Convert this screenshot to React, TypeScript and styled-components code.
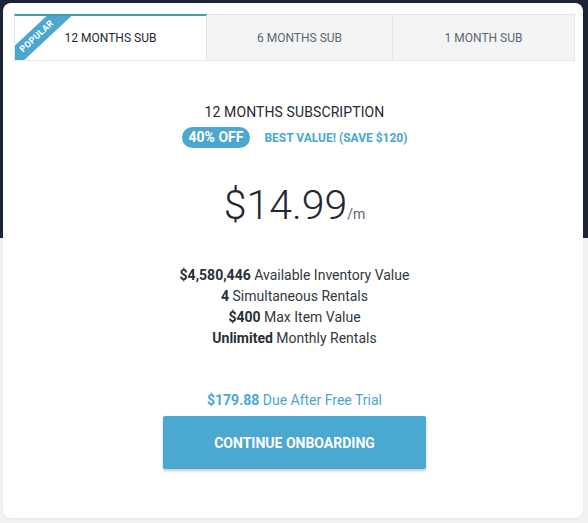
import * as React from 'react';
import styled, { createGlobalStyle } from 'styled-components';

const GlobalStyle = createGlobalStyle`
  html, body {
    margin: 0;
    padding: 0;
  }
  body {
    font-family: Roboto, 'Liberation Sans', Arial, sans-serif;
  }
`;

const Page = styled.div`
  width: 588px;
  height: 523px;
  box-sizing: border-box;
  padding: 3px 5px 5px 3px;
  background: linear-gradient(to bottom, #1b2537 0, #1b2537 238px, #f2f2f2 238px);
`;

const Card = styled.div`
  height: 515px;
  box-sizing: border-box;
  padding: 11px 8px 0 11px;
  background: #fff;
  border-radius: 8px;
  box-shadow: 0 1px 3px rgba(0, 0, 0, 0.06);
  display: flex;
  flex-direction: column;
  align-items: center;
`;

const Tabs = styled.div`
  align-self: stretch;
  display: grid;
  grid-template-columns: 193px 186px 1fr;
  height: 47px;
`;

const Tab = styled.div<{ $active?: boolean }>`
  position: relative;
  overflow: hidden;
  display: flex;
  align-items: center;
  justify-content: center;
  box-sizing: border-box;
  font-size: 12px;
  color: ${(p) => (p.$active ? '#1f2733' : '#5f6670')};
  background: ${(p) => (p.$active ? '#fff' : '#f3f4f6')};
  border: 1px solid #e4e5e8;
  border-top: ${(p) => (p.$active ? '2px solid #4a9fa0' : '1px solid #e4e5e8')};
  cursor: pointer;
  & + & {
    border-left: none;
  }
`;

// corner ribbon, centred on the tab's top-left diagonal
const Ribbon = styled.div`
  position: absolute;
  top: 12px;
  left: -26px;
  width: 96px;
  height: 17px;
  transform: rotate(-43deg);
  background: #4aa7cf;
  color: #fff;
  font-size: 9px;
  font-weight: 700;
  line-height: 17px;
  text-align: center;
  letter-spacing: 0.3px;
`;

const Title = styled.div`
  margin-top: 43px;
  font-size: 14px;
  color: #252a33;
  letter-spacing: 0.1px;
`;

const OfferRow = styled.div`
  margin-top: 7px;
  display: flex;
  align-items: center;
  gap: 14px;
`;

const Pill = styled.span`
  display: inline-block;
  height: 21px;
  line-height: 21px;
  padding: 0 7px;
  border-radius: 11px;
  background: #4aa7cf;
  color: #fff;
  font-size: 14px;
  font-weight: 700;
`;

const BestValue = styled.span`
  color: #4aa7cf;
  font-size: 12px;
  font-weight: 700;
`;

const Price = styled.div`
  margin-top: 33px;
  display: flex;
  align-items: baseline;
  color: #1f2733;
`;

const Amount = styled.span`
  font-size: 41px;
  font-weight: 300;
`;

const Per = styled.span`
  font-size: 14px;
  color: #5f6670;
`;

const Features = styled.ul`
  margin: 36px 0 0;
  padding: 0;
  list-style: none;
  text-align: center;
  font-size: 14px;
  line-height: 21px;
  color: #33383f;
  b {
    font-weight: 700;
    color: #2a2f37;
  }
`;

const Due = styled.div`
  margin-top: 43px;
  font-size: 14px;
  color: #4aa7cf;
  b {
    font-weight: 700;
  }
`;

const Button = styled.button`
  margin-top: 8px;
  width: 263px;
  height: 53px;
  border: none;
  border-radius: 2px;
  background: #4ba8d0;
  color: #fff;
  font-family: inherit;
  font-size: 14px;
  font-weight: 700;
  cursor: pointer;
  box-shadow: 0 2px 3px rgba(0, 0, 0, 0.22);
`;

const tabs = ['12 MONTHS SUB', '6 MONTHS SUB', '1 MONTH SUB'];

const features: [string, string][] = [
  ['$4,580,446', 'Available Inventory Value'],
  ['4', 'Simultaneous Rentals'],
  ['$400', 'Max Item Value'],
  ['Unlimited', 'Monthly Rentals'],
];

export default function App() {
  const [active, setActive] = React.useState(0);

  return (
    <Page>
      <GlobalStyle />
      <Card>
        <Tabs>
          {tabs.map((t, i) => (
            <Tab key={t} $active={active === i} onClick={() => setActive(i)}>
              {i === 0 && <Ribbon>POPULAR</Ribbon>}
              {t}
            </Tab>
          ))}
        </Tabs>
        <Title>12 MONTHS SUBSCRIPTION</Title>
        <OfferRow>
          <Pill>40% OFF</Pill>
          <BestValue>BEST VALUE! (SAVE $120)</BestValue>
        </OfferRow>
        <Price>
          <Amount>$14.99</Amount>
          <Per>/m</Per>
        </Price>
        <Features>
          {features.map(([b, rest]) => (
            <li key={rest}>
              <b>{b}</b> {rest}
            </li>
          ))}
        </Features>
        <Due>
          <b>$179.88</b> Due After Free Trial
        </Due>
        <Button>CONTINUE ONBOARDING</Button>
      </Card>
    </Page>
  );
}
